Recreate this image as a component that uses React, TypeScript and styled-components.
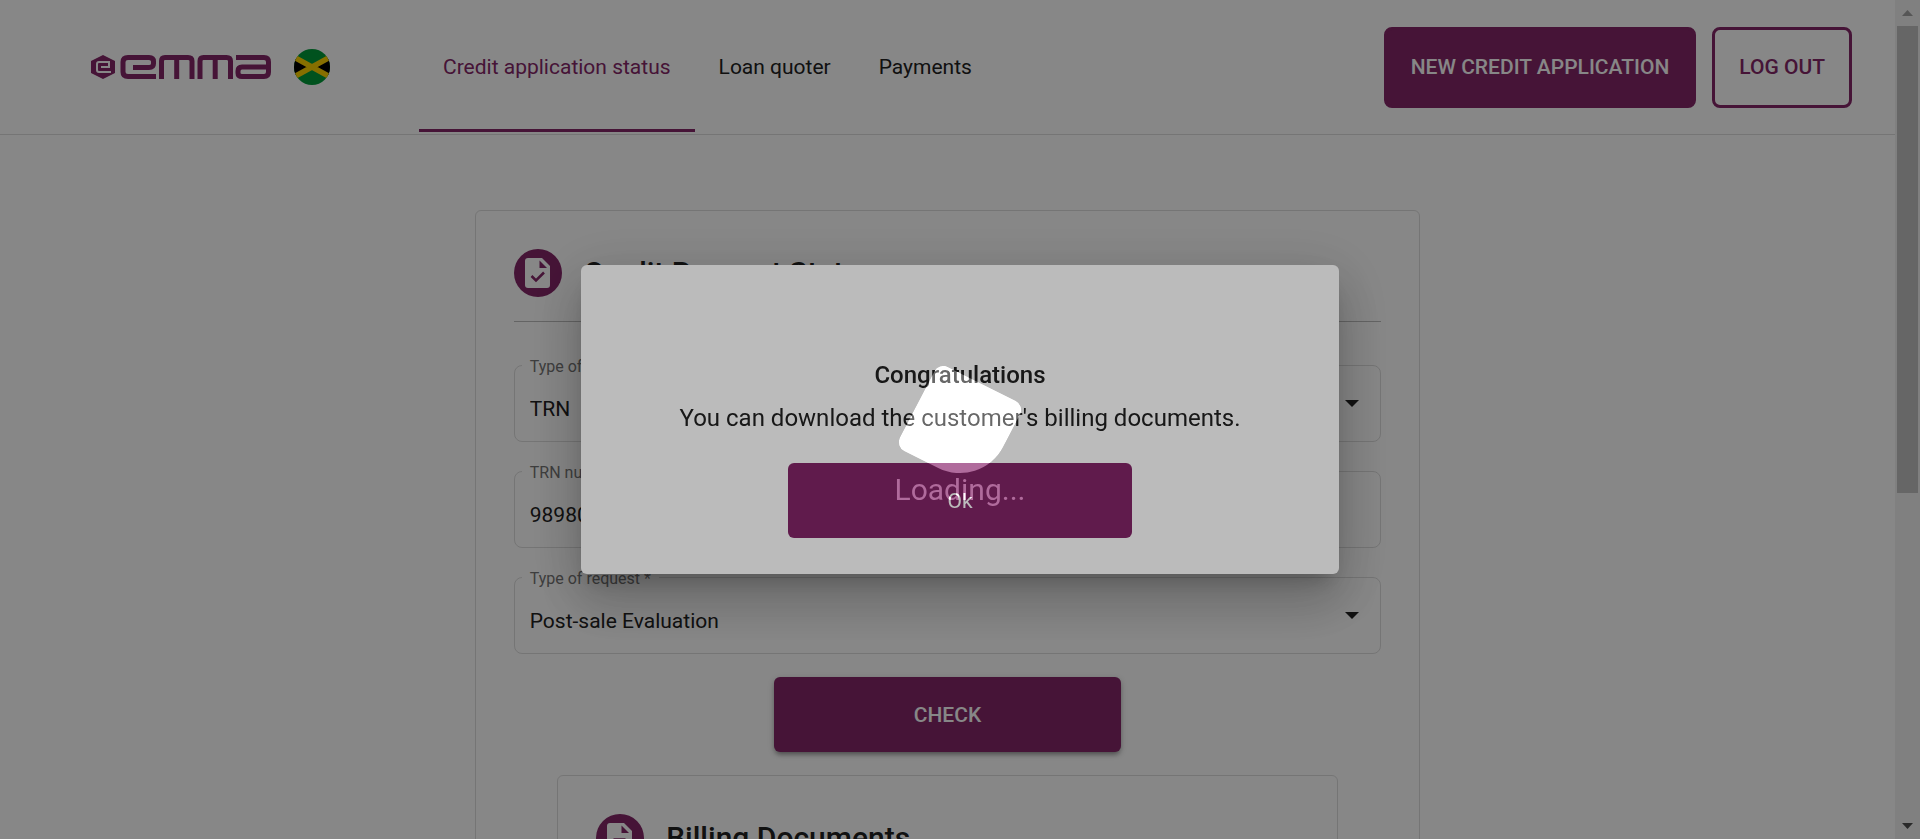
import React from "react";
import styled, { createGlobalStyle, css } from "styled-components";

const purple = "#842668";
const line = "#dddddd";

const GlobalStyle = createGlobalStyle`
  * { box-sizing: border-box; }
  body {
    margin: 0;
    background: #fff;
    color: #212121;
    font-family: Roboto, "Liberation Sans", sans-serif;
    font-size: 21px;
    line-height: 24px;
  }
  button, input, select { font: inherit; color: inherit; }
`;

const Shell = styled.div`
  display: flex;
  height: 100vh;
  overflow: hidden;
`;

const Page = styled.div`
  flex: 1;
  min-width: 0;
  overflow: auto;
  scrollbar-width: none;
`;

const ScrollTrack = styled.div`
  display: flex;
  flex-direction: column;
  align-items: center;
  width: 25px;
  padding: 10px 0;
  gap: 10px;
  background: #f1f1f1;
`;

const ScrollThumb = styled.div`
  width: 21px;
  flex: 0 1 467px;
  background: #c1c1c1;
`;

const ScrollArrow = styled.svg<{ $end?: boolean }>`
  width: 11px;
  height: 6px;
  flex: none;
  fill: ${(p) => (p.$end ? "#505050" : "#a3a3a3")};
  ${(p) => p.$end && css`margin-top: auto;`}
`;

const Header = styled.header`
  display: flex;
  align-items: center;
  height: 135px;
  padding: 0 43px 0 91px;
  border-bottom: 1px solid ${line};
`;

const Brand = styled.a`
  display: flex;
  align-items: center;
  gap: 23px;
`;

const Nav = styled.nav`
  display: flex;
  align-self: stretch;
  margin-left: 89px;
`;

const NavLink = styled.a<{ $active?: boolean }>`
  display: flex;
  align-items: center;
  padding: 4px 24px 0;
  margin-bottom: 2px;
  border-bottom: 3px solid ${(p) => (p.$active ? purple : "transparent")};
  color: ${(p) => (p.$active ? purple : "#212121")};
  text-decoration: none;
`;

const Actions = styled.div`
  display: flex;
  gap: 16px;
  margin-left: auto;
`;

const HeaderButton = styled.button<{ $filled?: boolean }>`
  height: 81px;
  padding: 0 24px;
  border: 3px solid ${purple};
  border-radius: 8px;
  background: ${(p) => (p.$filled ? purple : "transparent")};
  color: ${(p) => (p.$filled ? "#fff" : purple)};
  font-weight: 500;
`;

const Card = styled.section<{ $nested?: boolean }>`
  width: ${(p) => (p.$nested ? "90%" : "calc(50% - 2px)")};
  margin: ${(p) => (p.$nested ? "23px auto 0" : "75px auto")};
  padding: 38px;
  border: 1px solid ${line};
  border-radius: 6px;
`;

const CardHead = styled.div`
  display: flex;
  align-items: center;
  gap: 22px;
  padding-bottom: 24px;
  border-bottom: 1px solid #bdbdbd;
`;

const Badge = styled.span`
  display: grid;
  place-items: center;
  width: 48px;
  height: 48px;
  border-radius: 50%;
  background: ${purple};
`;

const CardTitle = styled.h2`
  margin: 0;
  font-size: 30px;
  line-height: 36px;
  font-weight: 500;
`;

const Form = styled.form`
  display: flex;
  flex-direction: column;
  gap: 29px;
  padding-top: 43px;
`;

const Field = styled.div`
  position: relative;
  display: grid;
  align-items: center;
`;

const FieldLabel = styled.label`
  position: absolute;
  top: -8px;
  left: 8px;
  padding: 0 8px;
  background: #fff;
  color: #757575;
  font-size: 16px;
  line-height: 20px;
`;

const control = css`
  grid-area: 1 / 1;
  width: 100%;
  height: 77px;
  padding: 10px 15px 0;
  border: 1px solid ${line};
  border-radius: 8px;
  background: transparent;
  appearance: none;
`;

const TextInput = styled.input`${control}`;
const Select = styled.select`${control}`;

const Caret = styled.svg`
  grid-area: 1 / 1;
  justify-self: end;
  width: 14px;
  height: 7px;
  margin-right: 22px;
  pointer-events: none;
`;

const CheckButton = styled.button`
  align-self: center;
  width: 40%;
  height: 75px;
  margin-top: -6px;
  border: 0;
  border-radius: 6px;
  background: ${purple};
  color: #fff;
  font-weight: 500;
  box-shadow: 0 4px 5px -2px rgba(0, 0, 0, 0.3), 0 2px 6px rgba(0, 0, 0, 0.24);
`;

const Backdrop = styled.div`
  position: fixed;
  inset: 0;
  display: flex;
  align-items: center;
  justify-content: center;
  background: rgba(0, 0, 0, 0.28);
`;

const Dialog = styled.div`
  display: flex;
  flex-direction: column;
  align-items: center;
  width: 758px;
  max-width: 90%;
  padding: 92px 38px 36px;
  border-radius: 6px;
  background: #fff;
  font-size: 24px;
  line-height: 36px;
  text-align: center;
  box-shadow: 0 14px 19px -9px rgba(0, 0, 0, 0.2), 0 30px 48px 4px rgba(0, 0, 0, 0.14),
    0 11px 58px 10px rgba(0, 0, 0, 0.12);
`;

const DialogTitle = styled.h3`
  margin: 0 0 7px;
  font-size: 24px;
  font-weight: 500;
`;

const DialogText = styled.p`
  margin: 0;
`;

const OkButton = styled.button`
  width: 344px;
  max-width: 100%;
  height: 75px;
  margin-top: 27px;
  border: 0;
  border-radius: 6px;
  background: ${purple};
  color: #fff;
  font-size: 21px;
`;

const Scrim = styled.div`
  position: fixed;
  inset: 0;
  background: rgba(0, 0, 0, 0.267);
`;

const Loader = styled.div`
  position: fixed;
  inset: 0;
  display: flex;
  flex-direction: column;
  align-items: center;
  justify-content: center;
  padding-top: 44px;
  color: #505050;
  font-size: 30px;
  line-height: 32px;
  mix-blend-mode: plus-lighter;
`;

const LoaderBlock = styled.div`
  width: 96px;
  height: 96px;
  border-radius: 10px 10px 48px 10px;
  background: currentColor;
  transform: scale(1, 0.98) rotate(27deg);
`;

const Logo = () => (
  <svg width="180" height="24" viewBox="0 0 180 24" role="img" aria-label="emma">
    <path d="M12 0 24 6V18L12 24 0 18V6Z" fill={purple} />
    <path d="M20 17H8Q6 17 6 15V9Q6 7 8 7H18V12H10" fill="none" stroke="#fff" strokeWidth="2" />
    <g fill="none" stroke={purple} strokeWidth="5">
      <path d="M65 21.500H37Q32 21.500 32 17V7Q32 2.500 37 2.500H58Q62.500 2.500 62.500 6.500V8.500Q62.500 12.500 58 12.500H42" />
      <path d="M70.500 24V6Q70.500 2.500 74 2.500H97Q101 2.500 101 6V24M85.700 2.500V24" />
      <path d="M109 24V6Q109 2.500 112.500 2.500H135.500Q139.500 2.500 139.500 6V24M124.200 2.500V24" />
      <path d="M145 2.500H173Q177.500 2.500 177.500 7V17Q177.500 21.500 173 21.500H151Q147 21.500 147 18V16Q147 12 151 12H177" />
    </g>
  </svg>
);

const Flag = () => (
  <svg width="36" height="36" viewBox="0 0 36 36" role="img" aria-label="Jamaica">
    <defs>
      <clipPath id="round"><circle cx="18" cy="18" r="18" /></clipPath>
    </defs>
    <g clipPath="url(#round)">
      <path d="M0 0H36V36H0Z" fill="#009b3a" />
      <path d="M0 8 18 18 0 28ZM36 8 18 18 36 28Z" fill="#000" />
      <path d="M-2 7 38 29M38 7-2 29" stroke="#fed100" strokeWidth="5.500" />
    </g>
  </svg>
);

const DocIcon = ({ checked }: { checked?: boolean }) => (
  <svg width="26" height="30" viewBox="0 0 26 30" aria-hidden="true">
    <path d="M3 0H17L25 8V27Q25 30 22 30H3Q0 30 0 27V3Q0 0 3 0Z" fill="#fff" />
    <path d="M14.500 2.500V10H22Z" fill={purple} />
    {checked ? (
      <path d="M6.500 18 11 22.500 19 14.500" fill="none" stroke={purple} strokeWidth="2.500" />
    ) : (
      <path d="M6.500 16.500H18.500M6.500 22.500H18.500" stroke={purple} strokeWidth="2.500" />
    )}
  </svg>
);

const SelectField = ({ id, label, value }: { id: string; label: string; value: string }) => (
  <Field>
    <Select id={id} defaultValue={value}>
      <option>{value}</option>
    </Select>
    <FieldLabel htmlFor={id}>{label}</FieldLabel>
    <Caret viewBox="0 0 14 7" aria-hidden="true"><path d="M0 0H14L7 7Z" fill="#212121" /></Caret>
  </Field>
);

export default function App() {
  return (
    <>
      <GlobalStyle />
      <Shell>
        <Page>
          <Header>
            <Brand href="#"><Logo /><Flag /></Brand>
            <Nav>
              <NavLink href="#" $active>Credit application status</NavLink>
              <NavLink href="#">Loan quoter</NavLink>
              <NavLink href="#">Payments</NavLink>
            </Nav>
            <Actions>
              <HeaderButton $filled>NEW CREDIT APPLICATION</HeaderButton>
              <HeaderButton>LOG OUT</HeaderButton>
            </Actions>
          </Header>
          <main>
            <Card>
              <CardHead>
                <Badge><DocIcon checked /></Badge>
                <CardTitle>Credit Request Status</CardTitle>
              </CardHead>
              <Form>
                <SelectField id="doc-type" label="Type of document *" value="TRN" />
                <Field>
                  <TextInput id="trn" defaultValue="989800142" />
                  <FieldLabel htmlFor="trn">TRN number *</FieldLabel>
                </Field>
                <SelectField id="request-type" label="Type of request *" value="Post-sale Evaluation" />
                <CheckButton type="button">CHECK</CheckButton>
              </Form>
              <Card $nested>
                <CardHead>
                  <Badge><DocIcon /></Badge>
                  <CardTitle>Billing Documents</CardTitle>
                </CardHead>
              </Card>
            </Card>
          </main>
        </Page>
        <ScrollTrack aria-hidden="true">
          <ScrollArrow viewBox="0 0 11 6"><path d="M0 6H11L5.500 0Z" /></ScrollArrow>
          <ScrollThumb />
          <ScrollArrow $end viewBox="0 0 11 6"><path d="M0 0H11L5.500 6Z" /></ScrollArrow>
        </ScrollTrack>
      </Shell>
      <Backdrop>
        <Dialog role="dialog" aria-modal="true" aria-labelledby="dialog-title">
          <DialogTitle id="dialog-title">Congratulations</DialogTitle>
          <DialogText>You can download the customer's billing documents.</DialogText>
          <OkButton>Ok</OkButton>
        </Dialog>
      </Backdrop>
      <Scrim />
      <Loader role="status">
        <LoaderBlock />
        Loading...
      </Loader>
    </>
  );
}
